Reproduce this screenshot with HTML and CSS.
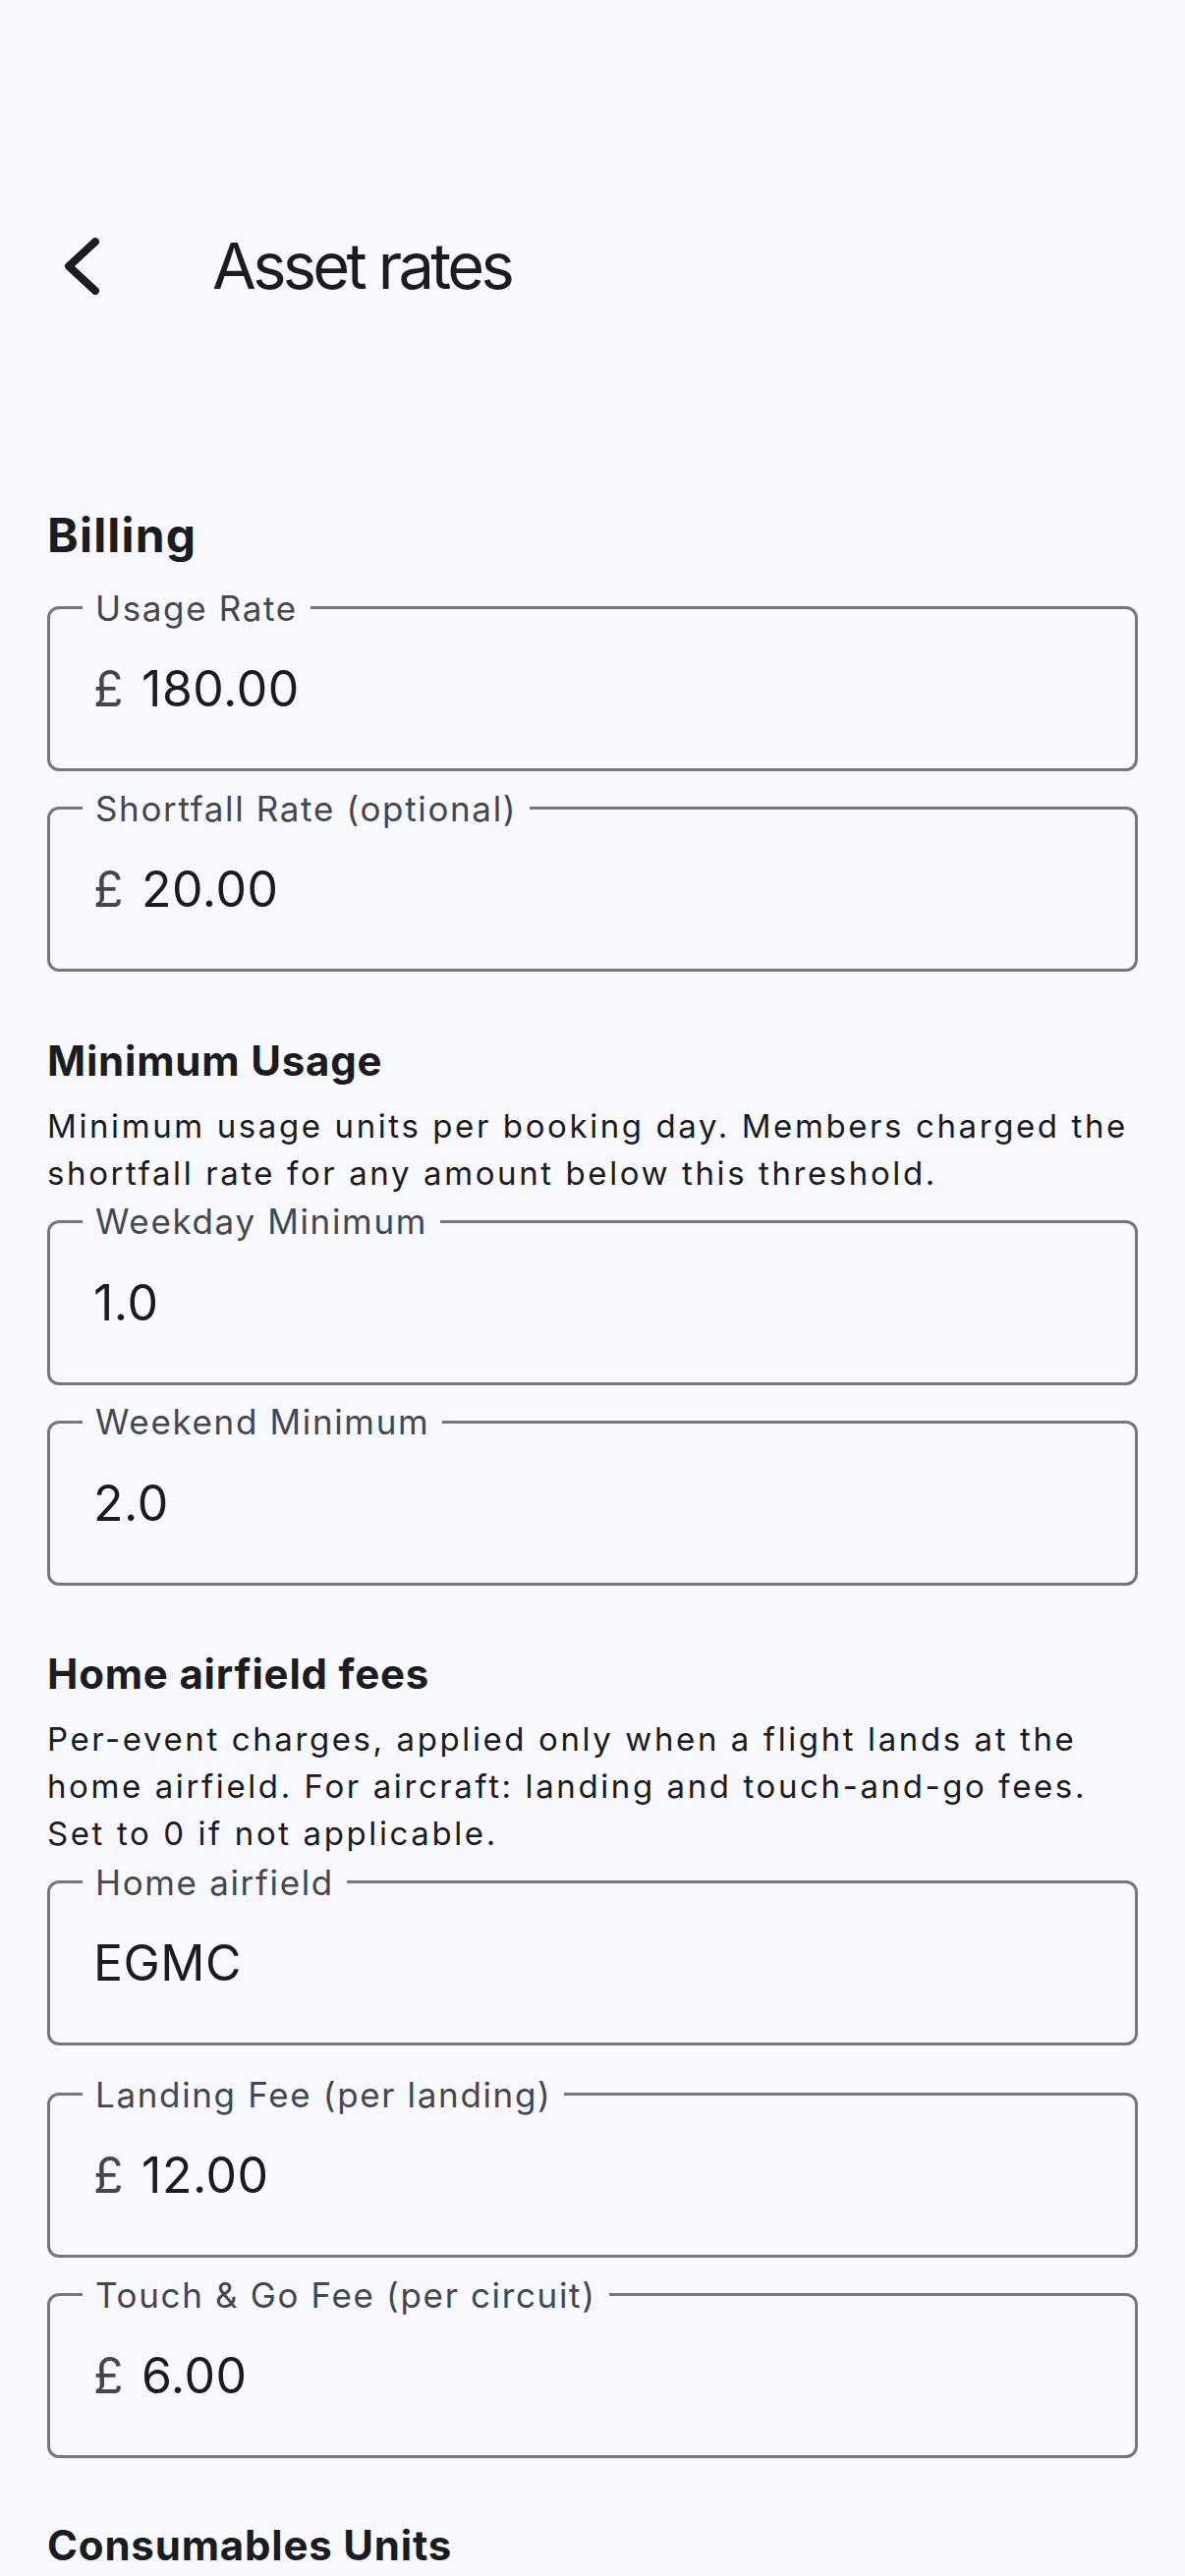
FILE: index.html
```html
<!DOCTYPE html>
<html lang="en">
<head>
<meta charset="utf-8">
<title>Asset rates</title>
<link rel="stylesheet" href="styles.css">
</head>
<body>
<div class="screen">
  <header class="appbar">
    <button class="back" aria-label="Back">
      <svg class="back-icon" viewBox="0 0 72 72" width="72" height="72" aria-hidden="true">
        <path d="M49 11 L22 36 L49 61" fill="none" stroke="#1a1c20" stroke-width="8" stroke-linecap="round" stroke-linejoin="round"/>
      </svg>
    </button>
    <h1 class="title">Asset rates</h1>
  </header>

  <main class="content">
    <section class="section section-first">
      <h2 class="heading heading-lg">Billing</h2>
      <div class="fields">
        <div class="field">
          <span class="label">Usage Rate</span>
          <div class="value"><span class="prefix">£</span><span class="text">180.00</span></div>
        </div>
        <div class="field">
          <span class="label">Shortfall Rate (optional)</span>
          <div class="value"><span class="prefix">£</span><span class="text">20.00</span></div>
        </div>
      </div>
    </section>

    <section class="section">
      <h2 class="heading">Minimum Usage</h2>
      <p class="desc">Minimum usage units per booking day. Members charged the<br>shortfall rate for any amount below this threshold.</p>
      <div class="fields">
        <div class="field">
          <span class="label">Weekday Minimum</span>
          <div class="value"><span class="text">1.0</span></div>
        </div>
        <div class="field">
          <span class="label">Weekend Minimum</span>
          <div class="value"><span class="text">2.0</span></div>
        </div>
      </div>
    </section>

    <section class="section">
      <h2 class="heading">Home airfield fees</h2>
      <p class="desc">Per-event charges, applied only when a flight lands at the<br>home airfield. For aircraft: landing and touch-and-go fees.<br>Set to 0 if not applicable.</p>
      <div class="fields">
        <div class="field field-spaced">
          <span class="label">Home airfield</span>
          <div class="value"><span class="text">EGMC</span></div>
        </div>
        <div class="field">
          <span class="label">Landing Fee (per landing)</span>
          <div class="value"><span class="prefix">£</span><span class="text">12.00</span></div>
        </div>
        <div class="field">
          <span class="label">Touch &amp; Go Fee (per circuit)</span>
          <div class="value"><span class="prefix">£</span><span class="text">6.00</span></div>
        </div>
      </div>
    </section>

    <section class="section section-last">
      <h2 class="heading">Consumables Units</h2>
    </section>
  </main>
</div>
</body>
</html>
```

FILE: styles.css
```css
html, body {
  margin: 0;
  padding: 0;
  background: #f8f9ff;
}

body {
  font-family: Inter, "Noto Sans", "Liberation Sans", sans-serif;
  color: #1a1c20;
  -webkit-font-smoothing: antialiased;
}

.screen {
  width: 1206px;
  min-height: 2622px;
  overflow: hidden;
}

.appbar {
  display: flex;
  align-items: center;
  height: 132px;
  margin-top: 205px;
  padding-left: 48px;
}

.back {
  display: flex;
  align-items: center;
  justify-content: center;
  width: 72px;
  height: 72px;
  padding: 0;
  margin: 0;
  border: 0;
  background: none;
}

.back-icon {
  display: block;
}

.title {
  margin: 0 0 0 96px;
  font-size: 65px;
  line-height: 90px;
  font-weight: 400;
  letter-spacing: -3.7px;
  color: #1a1c20;
}

.content {
  padding: 0 48px;
}

.section {
  margin-top: 62.5px;
}

.section-first {
  margin-top: 178px;
}

.section-last {
  margin-top: 61px;
}

.heading {
  margin: 0;
  font-size: 42px;
  line-height: 56px;
  font-weight: 700;
  letter-spacing: 0.8px;
  color: #1a1c20;
}

.heading-lg {
  font-size: 48px;
  line-height: 60px;
  letter-spacing: 1.2px;
  margin-bottom: 42px;
}

.desc {
  margin: 14px 0 24px;
  font-size: 33px;
  line-height: 48px;
  letter-spacing: 2.6px;
  color: #1a1c20;
}

.fields {
  display: flex;
  flex-direction: column;
  gap: 36px;
}

.field {
  position: relative;
  box-sizing: border-box;
  height: 168px;
  border: 3px solid #74777f;
  border-radius: 12px;
  display: flex;
  align-items: center;
  padding-left: 44px;
}

.field-spaced {
  margin-bottom: 12px;
}

.label {
  position: absolute;
  top: -23.5px;
  left: 33px;
  padding: 0 13px;
  background: #f8f9ff;
  font-size: 35px;
  line-height: 44px;
  letter-spacing: 1.65px;
  color: #44474e;
  white-space: nowrap;
}

.value {
  display: flex;
  align-items: center;
  font-size: 50px;
  line-height: 60px;
  letter-spacing: 0.5px;
}

.prefix {
  color: #44474e;
  margin-right: 18px;
}

.text {
  color: #1a1c20;
}
```
